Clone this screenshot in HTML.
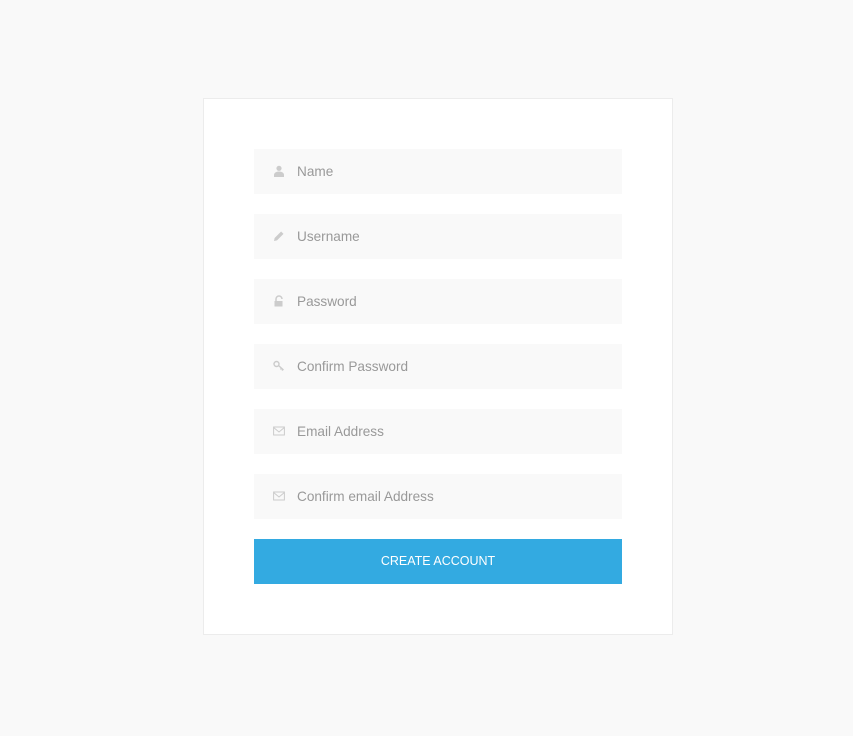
<!DOCTYPE html>
<html><head><meta charset="utf-8"><style>
body{margin:0;background:#f9f9f9;width:853px;height:736px;position:relative;font-family:"Liberation Sans",sans-serif;}
.card{position:absolute;left:203px;top:98px;width:468px;height:535px;background:#fff;border:1px solid #ececec;}
.f{position:absolute;left:50px;width:368px;height:45px;background:#f9f9f9;color:#999;font-size:13.6px;line-height:45px;}
.f span{position:absolute;left:43px;top:0}
.f svg{position:absolute;left:19px;top:16px;width:12px;height:12px}
.btn{position:absolute;left:50px;top:440px;width:368px;height:45px;background:#33aae1;color:#fff;font-size:12.5px;line-height:45px;text-align:center;}
</style></head><body>
<div class="card">
<div class="f" style="top:50px"><svg viewBox="0 0 12 12"><circle cx="6" cy="3.3" r="2.6" fill="#ccc"/><path d="M1 12v-2c0-2 2-3.5 5-3.5s5 1.5 5 3.5v2z" fill="#ccc"/></svg><span>Name</span></div>
<div class="f" style="top:115px"><svg viewBox="0 0 12 12"><path d="M1 11l0.6-3 6.5-6.5 2.4 2.4-6.5 6.5z" fill="#ccc"/></svg><span>Username</span></div>
<div class="f" style="top:180px"><svg viewBox="0 0 12 12"><path d="M3 6V4a3 3 0 0 1 6 0" stroke="#ccc" stroke-width="1.5" fill="none"/><rect x="1.5" y="6" width="8" height="5.5" fill="#ccc"/></svg><span>Password</span></div>
<div class="f" style="top:245px"><svg viewBox="0 0 12 12"><circle cx="3.5" cy="4" r="2.5" stroke="#ccc" stroke-width="1.4" fill="none"/><path d="M5.5 5.5l5 4.5M8.5 8l-1 1.5M10 9.2l-1 1.3" stroke="#ccc" stroke-width="1.4"/></svg><span>Confirm Password</span></div>
<div class="f" style="top:310px"><svg viewBox="0 0 12 12"><rect x="0.6" y="2" width="10.8" height="8" stroke="#ccc" stroke-width="1" fill="none"/><path d="M0.6 2.5L6 7l5.4-4.5" stroke="#ccc" stroke-width="1" fill="none"/></svg><span>Email Address</span></div>
<div class="f" style="top:375px"><svg viewBox="0 0 12 12"><rect x="0.6" y="2" width="10.8" height="8" stroke="#ccc" stroke-width="1" fill="none"/><path d="M0.6 2.5L6 7l5.4-4.5" stroke="#ccc" stroke-width="1" fill="none"/></svg><span>Confirm email Address</span></div>
<div class="btn">CREATE ACCOUNT</div>
</div>
</body></html>
